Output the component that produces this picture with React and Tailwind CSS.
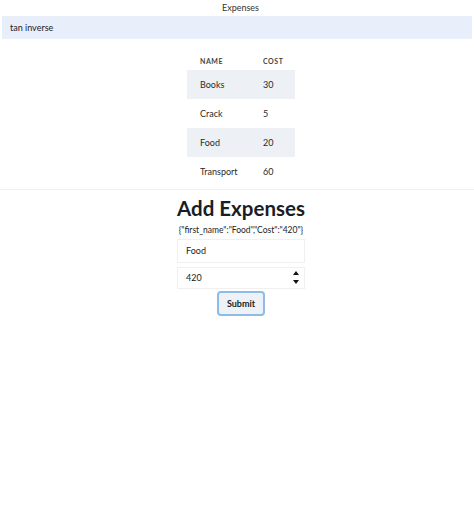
import React from "react";

const rows = [
  ["Books", "30"],
  ["Crack", "5"],
  ["Food", "20"],
  ["Transport", "60"],
];

export default function App() {
  return (
    <div className="w-[474px] h-[523px] bg-white text-[#212529]" style={{ fontFamily: 'Lato, "Noto Sans", sans-serif' }}>
      <div className="h-[15px] flex items-center justify-center pl-[7px] text-[9px] text-[#333]">Expenses</div>
      <div className="mt-[1px] mx-[2px] h-[23px] bg-[#e8eefa] flex items-center pl-[8px] text-[9px] text-[#222]">tan inverse</div>
      <div className="flex justify-center pt-[13px] pl-[8px]">
        <table className="w-[108px] table-fixed border-collapse text-[9px]">
          <colgroup>
            <col className="w-[76px]" />
            <col className="w-[32px]" />
          </colgroup>
          <thead>
            <tr className="h-[18px]">
              <th className="text-left pl-[13px] text-[7px] font-bold tracking-[0.08em] text-[#444]">NAME</th>
              <th className="text-left text-[7px] font-bold tracking-[0.08em] text-[#444]">COST</th>
            </tr>
          </thead>
          <tbody>
            {rows.map(([n, c], i) => (
              <tr key={n} className={"h-[29px] " + (i % 2 === 0 ? "bg-[#edf1f5]" : "bg-white")}>
                <td className="pl-[13px] text-[#2a2a2a]">{n}</td>
                <td className="text-[#2a2a2a]">{c}</td>
              </tr>
            ))}
          </tbody>
        </table>
      </div>
      <div className="mt-[3px] border-t border-[#f0f0f0]" />
      <div className="flex flex-col items-center pl-[8px]">
        <h1 className="mt-[4px] text-[20.5px] font-bold leading-[28px] text-[#1a1e24]">Add Expenses</h1>
        <div className="mt-[2px] text-[8.5px] leading-[12px] text-[#222]">{'{"first_name":"Food","Cost":"420"}'}</div>
        <div className="mt-[3px] w-[128px] h-[24px] border border-[#f0f0f0] flex items-center pl-[8px] text-[9px] text-[#222]">Food</div>
        <div className="relative mt-[4px] w-[128px] h-[22px] border border-[#f0f0f0] flex items-center pl-[8px] text-[9px] text-[#222]">
          420
          <div className="absolute right-[5px] top-[3px] flex flex-col items-center gap-[5px]">
            <svg width="6" height="4" viewBox="0 0 6 4"><path d="M3 0L6 4H0z" fill="#111" /></svg>
            <svg width="6" height="4" viewBox="0 0 6 4"><path d="M0 0H6L3 4z" fill="#111" /></svg>
          </div>
        </div>
        <button className="mt-[2px] w-[48px] h-[25px] rounded-[4px] border-2 border-[#8fbbe8] bg-[#eef2f6] text-[9px] font-bold text-[#1a1e24]">Submit</button>
      </div>
    </div>
  );
}
